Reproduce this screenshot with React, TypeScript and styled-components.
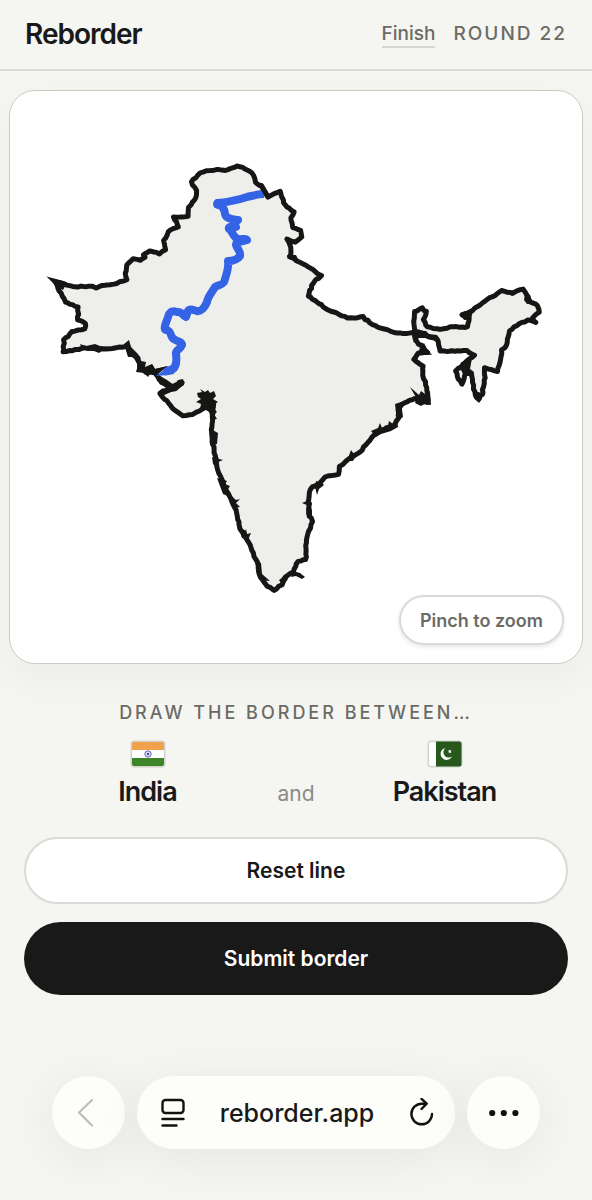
import React from "react";
import styled, { createGlobalStyle } from "styled-components";

const color = {
  paper: "#f5f6f1",
  ink: "#191919",
  muted: "#6b6b66",
  faint: "#8b8b87",
  line: "#d7d7d2",
  land: "#eeefeb",
  blue: "#3563e6",
};

const Global = createGlobalStyle`
  *, *::before, *::after { box-sizing: border-box; }
  html, body { margin: 0; background: ${color.paper}; }
  body { font-family: Inter, "Liberation Sans", sans-serif; color: ${color.ink}; }
  button { font: inherit; color: inherit; margin: 0; padding: 0; border: 0; background: none; cursor: pointer; }
  h1, h2, p { margin: 0; }
`;

const Page = styled.div`
  min-height: 100vh;
  display: flex;
  flex-direction: column;
  background: ${color.paper};
`;

const Header = styled.header`
  display: flex;
  align-items: center;
  justify-content: space-between;
  height: 71px;
  padding: 0 25px 1px;
  border-bottom: 2px solid #dadad6;
`;

const Brand = styled.h1`
  font-size: 28px;
  line-height: 36px;
  font-weight: 600;
  letter-spacing: -1px;
`;

const HeaderMeta = styled.div`
  display: flex;
  align-items: center;
  gap: 18px;
  font-size: 19px;
  line-height: 24px;
  font-weight: 500;
  color: ${color.muted};
`;

const FinishLink = styled.a`
  color: inherit;
  text-decoration: none;
  box-shadow: 0 2px 0 ${color.line};
`;

const Round = styled.span`
  letter-spacing: 2px;
`;

const Main = styled.main`
  display: flex;
  flex-direction: column;
  padding: 19px 9px 0;
`;

const MapCard = styled.section`
  position: relative;
  aspect-ratio: 1;
  border: 1px solid #cbcbc6;
  border-radius: 26px;
  background: #fff;
  box-shadow: 0 16px 40px rgba(30, 30, 20, 0.04);
`;

const MapSvg = styled.svg`
  display: block;
  width: 100%;
  height: 100%;
`;

const ZoomHint = styled.button`
  position: absolute;
  right: 18px;
  bottom: 18px;
  height: 50px;
  padding: 0 19px;
  border: 2px solid #dadad6;
  border-radius: 25px;
  background: #fff;
  color: ${color.muted};
  font-size: 18px;
  font-weight: 600;
  box-shadow: 0 2px 4px rgba(0, 0, 0, 0.1);
`;

const Prompt = styled.section`
  padding: 37px 15px 0;
`;

const PromptLabel = styled.h2`
  font-size: 18px;
  line-height: 24px;
  font-weight: 500;
  letter-spacing: 3px;
  text-align: center;
  color: ${color.muted};
`;

const Countries = styled.div`
  display: grid;
  grid-template-columns: 1fr 50px 1fr;
  align-items: end;
  margin-top: 15px;
`;

const Country = styled.div`
  display: flex;
  flex-direction: column;
  align-items: center;
  gap: 8px;
`;

const CountryName = styled.p`
  font-size: 27px;
  line-height: 32px;
  font-weight: 600;
  letter-spacing: -1px;
`;

const Conjunction = styled.p`
  font-size: 21px;
  line-height: 28px;
  text-align: center;
  color: ${color.faint};
`;

const Actions = styled.div`
  display: flex;
  flex-direction: column;
  gap: 18px;
  padding: 29px 15px 0;
`;

const ActionButton = styled.button<{ $primary?: boolean }>`
  height: ${(p) => (p.$primary ? 73 : 67)}px;
  border-radius: 37px;
  font-size: 21px;
  line-height: 28px;
  font-weight: 600;
  ${(p) =>
    p.$primary
      ? `background: ${color.ink}; color: #fff;`
      : `background: #fff; border: 2px solid #dadad6;`}
`;

const BrowserBar = styled.nav`
  display: flex;
  gap: 12px;
  margin-top: auto;
  padding: 24px 52px 51px;
`;

const GlassSurface = styled.div`
  background: #fdfdf9;
  box-shadow: 0 8px 48px rgba(0, 0, 0, 0.07);
`;

const RoundButton = styled(GlassSurface).attrs({ as: "button" })`
  flex: none;
  display: grid;
  place-items: center;
  width: 73px;
  height: 73px;
  border-radius: 50%;
  background: #fdfdf9;
`;

const AddressPill = styled(GlassSurface)`
  flex: 1;
  display: flex;
  align-items: center;
  justify-content: space-between;
  height: 73px;
  padding: 0 20px 0 22px;
  border-radius: 37px;
`;

const IconButton = styled.button`
  display: grid;
  place-items: center;
`;

const Address = styled.span`
  font-size: 25px;
  line-height: 32px;
  font-weight: 500;
`;

type Point = [number, number];

function parse(text: string): Point[] {
  return text
    .trim()
    .split(/\s+/)
    .map((pair) => pair.split(",").map(Number) as Point);
}

/* Breaks long segments into short, slightly uneven ones, like a surveyed coast. */
function roughen(points: Point[], amount: number): string {
  const out: string[] = [];
  let seed = 7;
  const random = () => {
    seed = (seed * 16807) % 2147483647;
    return seed / 2147483647 - 0.5;
  };
  points.forEach(([x, y], i) => {
    const [nx, ny] = points[(i + 1) % points.length];
    const steps = Math.max(1, Math.round(Math.hypot(nx - x, ny - y) / 3));
    for (let s = 0; s < steps; s++) {
      const t = s / steps;
      const px = x + (nx - x) * t + random() * amount;
      const py = y + (ny - y) * t + random() * amount;
      out.push(`${px.toFixed(1)},${py.toFixed(1)}`);
    }
  });
  return `M${out.join("L")}Z`;
}

const outline = roughen(
  parse(`
  57,282 64,284 75,287 92,286 96,288 99,286 110,285 120,282 127,280 125,276 127,265 133,259 140,260 145,257
  143,255 150,251 157,252 160,254 165,250 164,240 168,232 178,227 174,217 188,216 189,207 196,198 196,190
  191,182 200,173 210,170 228,170 237,166 248,170 254,175 255,183 262,186 268,197 280,191 285,205 294,212
  291,218 293,227 300,230 302,237 295,242 287,239 291,247 290,257 303,264 313,270 321,276 313,283 308,296
  317,302 328,310 347,318 363,317 370,323 377,327 397,333 415,333 414,325 415,312 422,308 426,312 424,320
  427,327 440,329 450,327 468,327 469,318 462,315 470,312 485,301 502,291 513,293 523,289 527,295 530,302
  538,306 539,312 532,318 536,323 530,320 522,322 509,331 507,345 502,350 501,360 497,371 485,368 485,378
  482,395 478,399 475,395 471,373 466,373 462,384 457,377 456,371 465,363 474,355 467,351 440,351 437,338
  427,336 418,332 415,337 417,342 427,352 419,353 414,360 423,366 423,375 426,385 428,397 428,402 420,402
  415,399 402,404 398,410 399,418 393,426 378,431 372,438 362,450 352,457 340,467 338,474 325,477 318,485
  312,487 309,495 309,513 312,522 306,540 306,560 298,561 293,572 285,577 282,585 274,590 267,586 260,577
  258,565 249,542 240,528 235,507 225,488 218,470 214,450 211,430 213,412 213,404 205,408 193,414 183,416
  173,408 160,394 163,391 175,389 182,382 173,387 162,382 155,373 145,372 140,366 138,358 130,353 128,347
  125,347 100,349 85,348 63,352 64,340 72,332 85,329 86,323 78,320 78,307 65,302 58,288`),
  1.2,
);

/* River mouths, islets and inlets that stand out from the coast line. */
const coastDetail = [
  "M46.500,276.500L58,279.500L67,282.500L63,290L56,287L52,282Z",
  "M80,344L86,346L95,344L100,346L108,347L99,353L94,351L87,350L82,349Z",
  "M124,344L129,340L131,347L138,354L141,361L146,362L145,367L152,364L155,369L168,366L158,374L151,372L148,377L144,373L136,372L138,365L133,357L128,357Z",
  "M155,373L167,380L174,385L178,380L183,379L184,385L178,389L171,392L162,396L158,392L166,388L157,381Z",
  "M197,393L202,392L200,389L205,392L208,390L210,393L214,391L216,396L213,399L218,402L212,406L217,412L214,414L217,419L212,420L209,412L203,408L200,409L201,404L196,402L201,399L198,397Z",
  "M410,387L419,395L421,391L425,394L430,391L431,405L424,404L421,406L415,403L417,399Z",
  "M424,343L427,349L432,355L424,354L418,355L420,347Z",
  "M411,330L426,331L429,334L437,335L440,340L436,342L430,338L419,338L414,343L412,336Z",
  "M460,313L465,311L469,314L471,308L473,311L471,319L464,320Z",
  "M525,294L532,300L533,304L527,304L524,300Z",
  "M461,370L461,362L466,364L472,358L470,369L474,372L466,373L463,374Z",
  "M474,391L482,393L482,399L479,403L475,399Z",
  "M371,431L378,428L380,423L382,428L387,430L389,421L393,424L397,420L398,427L391,431L381,434L376,437Z",
  "M351,450L354,454L357,454L353,461L347,461Z",
  "M316,481L322,483L324,485L319,489L317,495L315,487Z",
  "M302,503L309,500L312,504L309,506Z",
  "M306,508L312,510L312,518L307,518Z",
  "M293,571L300,573L305,577L302,579L296,576L291,577Z",
  "M279,580L286,575L288,579L283,586Z",
  "M209,428L218,433L217,444L210,445Z",
  "M212,457L223,460L216,463L218,469L213,464Z",
  "M217,478L227,481L225,484L230,486L227,491L232,498L223,494Z",
  "M229,494L236,500L240,499L236,503L240,507L234,508Z",
  "M239,530L244,534L246,529L247,534L251,533L248,540L242,538Z",
  "M255,560L261,563L262,574L270,581L261,580L257,574Z",
  "M287,255L296,255L298,259L290,260Z",
  "M395,404L401,402L403,417L397,421Z",
].join("");

const playerLine =
  "M264,194C258,194 252,196 247,197C238,200 228,202 218,203C222,206 225,210 225,214C226,219 232,219 238,220L234,223L236,227C231,226 228,227 229,229C232,230 232,235 236,238C240,241 246,237 247,240C241,242 236,241 236,245C237,249 241,251 240,256C237,260 232,261 228,261C229,267 227,273 225,279C224,286 219,284 215,287C213,291 208,296 207,302C205,307 201,312 197,311C193,310 190,308 188,311L186,317C182,315 182,311 177,312C171,310 169,313 168,317C166,323 163,329 166,330C172,330 170,338 174,339C177,342 182,341 182,345C180,350 175,350 176,354C177,362 176,369 170,370L164,372";

function BorderMap() {
  return (
    <MapSvg viewBox="10 91 572 572" role="img" aria-label="Map of India and Pakistan">
      <path d={outline} fill={color.land} stroke="#161616" strokeWidth="5" strokeLinejoin="round" />
      <path d={coastDetail} fill="#161616" />
      <path d={playerLine} fill="none" stroke={color.blue} strokeWidth="8" strokeLinejoin="round" />
      <circle cx="218" cy="204" r="5" fill={color.blue} />
      <path d="M173,366L164,370L156,376L168,375L174,374Z" fill={color.blue} />
      <path d="M152,364L155,369L168,366L157,373L150,372Z" fill="#161616" />
      <path d="M262,187L268,197" stroke="#161616" strokeWidth="5" strokeLinecap="round" />
    </MapSvg>
  );
}

function IndiaFlag() {
  return (
    <svg width="36" height="28" viewBox="0 0 36 28" role="img" aria-label="Flag of India">
      <rect x="0.500" y="0.500" width="35" height="27" rx="4" fill="#d3d3ce" />
      <path d="M4,2H32Q34,2 34,4V10H2V4Q2,2 4,2Z" fill="#f2a04c" />
      <path d="M2,10H34V18H2Z" fill="#fff" />
      <path d="M2,18H34V24Q34,26 32,26H4Q2,26 2,24Z" fill="#3d8526" />
      <circle cx="18" cy="14" r="3.200" fill="#dcdcf4" stroke="#5957b8" strokeWidth="0.900" />
      <circle cx="18" cy="14" r="1.200" fill="#4a48ae" />
    </svg>
  );
}

function PakistanFlag() {
  return (
    <svg width="36" height="28" viewBox="0 0 36 28" role="img" aria-label="Flag of Pakistan">
      <rect x="0.500" y="0.500" width="35" height="27" rx="4" fill="#d3d3ce" />
      <path d="M4,2H9V26H4Q2,26 2,24V4Q2,2 4,2Z" fill="#fff" />
      <path d="M9,1.500H32Q34.500,1.500 34.500,4V24Q34.500,26.500 32,26.500H9Z" fill="#28581c" />
      <path d="M18.500,8A6,6 0 1 0 25,16.500A5.200,5.200 0 1 1 18.500,8Z" fill="#fff" />
      <path d="M22,9.500L23,10.500L24.600,10.200L23.800,11.600L24.400,13L22.900,12.500L21.800,13.300L21.900,11.800L20.800,10.900L22,10.600Z" fill="#fff" />
    </svg>
  );
}

export default function App() {
  return (
    <Page>
      <Global />
      <Header>
        <Brand>Reborder</Brand>
        <HeaderMeta>
          <FinishLink href="#finish">Finish</FinishLink>
          <Round>ROUND 22</Round>
        </HeaderMeta>
      </Header>
      <Main>
        <MapCard>
          <BorderMap />
          <ZoomHint type="button">Pinch to zoom</ZoomHint>
        </MapCard>
        <Prompt>
          <PromptLabel>DRAW THE BORDER BETWEEN…</PromptLabel>
          <Countries>
            <Country>
              <IndiaFlag />
              <CountryName>India</CountryName>
            </Country>
            <Conjunction>and</Conjunction>
            <Country>
              <PakistanFlag />
              <CountryName>Pakistan</CountryName>
            </Country>
          </Countries>
        </Prompt>
        <Actions>
          <ActionButton type="button">Reset line</ActionButton>
          <ActionButton type="button" $primary>
            Submit border
          </ActionButton>
        </Actions>
      </Main>
      <BrowserBar aria-label="Browser">
        <RoundButton aria-label="Back">
          <svg width="32" height="32" viewBox="0 0 32 32" fill="none" stroke="#bdbdba" strokeWidth="2.200" strokeLinecap="round" strokeLinejoin="round">
            <path d="M19,3L6,15.500L19,28.500" />
          </svg>
        </RoundButton>
        <AddressPill>
          <IconButton type="button" aria-label="Page menu">
            <svg width="28" height="30" viewBox="0 0 28 30" fill="none" stroke="#111" strokeWidth="2.400" strokeLinecap="round">
              <rect x="3.500" y="2" width="21" height="13" rx="3" />
              <path d="M3.500,21H24.500M3.500,27.500H17.500" />
            </svg>
          </IconButton>
          <Address>reborder.app</Address>
          <IconButton type="button" aria-label="Reload">
            <svg width="28" height="30" viewBox="0 0 28 30" fill="none" stroke="#111" strokeWidth="2.400" strokeLinecap="round" strokeLinejoin="round">
              <path d="M25,16A10.300,10.300 0 1 1 14.700,5.700H19.500M14.500,0.800L19.700,5.700L14.500,11" />
            </svg>
          </IconButton>
        </AddressPill>
        <RoundButton aria-label="More">
          <svg width="32" height="8" viewBox="0 0 32 8" fill="#111">
            <circle cx="4.200" cy="4" r="3.100" />
            <circle cx="15.800" cy="4" r="3.100" />
            <circle cx="27.400" cy="4" r="3.100" />
          </svg>
        </RoundButton>
      </BrowserBar>
    </Page>
  );
}
